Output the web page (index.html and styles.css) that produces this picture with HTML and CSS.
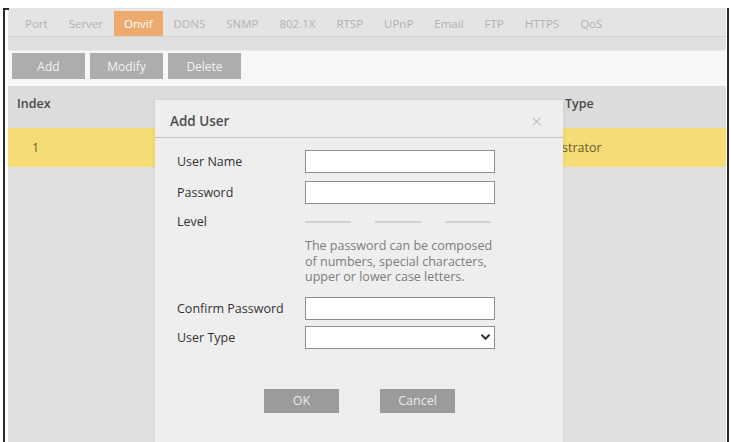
FILE: index.html
```html
<!DOCTYPE html>
<html lang="en">
<head>
    <meta charset="UTF-8">
    <meta name="viewport" content="width=device-width, initial-scale=1.0">
    <title>Network - Onvif</title>
    <link rel="stylesheet" href="styles.css">
</head>
<body>
<div class="frame">
    <span class="frame-tick"></span>

    <!-- network sub menu -->
    <div class="tabs">
        <span class="tab">Port</span>
        <span class="tab">Server</span>
        <span class="tab active">Onvif</span>
        <span class="tab">DDNS</span>
        <span class="tab">SNMP</span>
        <span class="tab">802.1X</span>
        <span class="tab">RTSP</span>
        <span class="tab">UPnP</span>
        <span class="tab">Email</span>
        <span class="tab">FTP</span>
        <span class="tab">HTTPS</span>
        <span class="tab">QoS</span>
    </div>
    <div class="tabs-line"></div>

    <div class="toolbar">
        <button class="btn">Add</button>
        <button class="btn">Modify</button>
        <button class="btn">Delete</button>
    </div>

    <div class="table">
        <div class="row head">
            <div class="cell cell-index">Index</div>
            <div class="cell cell-type">Type</div>
        </div>
        <div class="row selected">
            <div class="cell cell-index num">1</div>
            <div class="cell cell-type value">Administrator</div>
        </div>

        <!-- add user dialog -->
        <div class="dialog">
            <div class="dialog-head">
                <span class="dialog-title">Add User</span>
                <span class="dialog-close">&times;</span>
            </div>
            <div class="dialog-body">
                <div class="field">
                    <label class="field-label">User Name</label>
                    <input class="field-input" type="text">
                </div>
                <div class="field">
                    <label class="field-label">Password</label>
                    <input class="field-input" type="password">
                </div>
                <div class="field level">
                    <label class="field-label">Level</label>
                    <div class="level-bars">
                        <span></span><span></span><span></span>
                    </div>
                </div>
                <div class="hint">The password can be composed of numbers, special characters, upper or lower case letters.</div>
                <div class="field confirm">
                    <label class="field-label">Confirm Password</label>
                    <input class="field-input" type="password">
                </div>
                <div class="field">
                    <label class="field-label">User Type</label>
                    <div class="field-input select">
                        <svg width="11" height="8" viewBox="0 0 11 8"><path d="M1.5 1.8 L5.5 5.8 L9.5 1.8" fill="none" stroke="#333" stroke-width="2"/></svg>
                    </div>
                </div>
                <div class="dialog-buttons">
                    <button class="btn btn-dark">OK</button>
                    <button class="btn btn-dark">Cancel</button>
                </div>
            </div>
        </div>
    </div>
</div>
</body>
</html>
```

FILE: styles.css
```css
body {
  margin: 0;
  background: #fff;
  font-family: "Open Sans", "Noto Sans", sans-serif;
  color: #333;
}

.frame {
  position: relative;
  margin: 8px 2px 0 3px;
  height: 434px;
  border-left: 2px solid #2a2a2a;
  border-right: 2px solid #2a2a2a;
  padding: 0 1px 0 3px;
  display: flex;
  flex-direction: column;
}

.frame-tick {
  position: absolute;
  left: -2px;
  top: 0;
  width: 6px;
  height: 2px;
  background: #2a2a2a;
}

.tabs {
  height: 29px;
  background: #e4e4e4;
  display: flex;
  align-items: flex-end;
  padding-left: 7px;
  border-bottom: 1px solid #d2d2d2;
  box-sizing: border-box;
}

.tab {
  height: 25px;
  line-height: 25px;
  padding: 0 10px;
  margin-right: 1px;
  font-size: 11.5px;
  color: #b2b2b2;
}

.tab.active {
  background: #eeaa6c;
  color: #fff;
}

.tabs-line {
  height: 13px;
  background: #dfdfdf;
  border-bottom: 1px solid #ececec;
}

.toolbar {
  height: 35px;
  background: #f7f7f7;
  display: flex;
  align-items: flex-start;
  padding: 2px 0 0 4px;
  box-sizing: border-box;
  gap: 5px;
}

.btn {
  border: none;
  outline: none;
  cursor: pointer;
  width: 73px;
  height: 26px;
  padding: 0;
  font-family: inherit;
  font-size: 12px;
  color: #f2f2f2;
  background: #adadad;
}

.table {
  position: relative;
  flex: 1;
  background: #e0e0e0;
}

.row {
  position: relative;
}

.row.head {
  height: 42px;
  background: #dcdcdc;
}

.row.selected {
  height: 39px;
  background: #f5dc76;
}

.cell {
  position: absolute;
  top: 0;
  font-size: 12.5px;
  color: #555;
}

.head .cell {
  top: 9px;
  font-weight: 600;
  color: #4a4a4a;
}

.selected .cell {
  top: 11px;
  color: #6a5a2a;
}

.cell-index {
  left: 9px;
}

.num {
  left: 24px;
}

.cell-type {
  left: 557px;
}

.value {
  left: 513px;
}

.dialog {
  position: absolute;
  left: 147px;
  top: 14px;
  width: 408px;
  bottom: 0;
  background: #eeeeee;
  box-shadow: 0 0 4px rgba(0, 0, 0, .08);
}

.dialog-head {
  height: 38px;
  border-bottom: 1px solid #c4c4c4;
  display: flex;
  align-items: center;
  justify-content: space-between;
  padding: 4px 21px 0 15px;
  box-sizing: border-box;
}

.dialog-title {
  font-size: 13.5px;
  font-weight: 600;
  color: #4e4e4e;
}

.dialog-close {
  font-size: 19px;
  color: #b0b0b0;
  font-weight: 300;
}

.dialog-body {
  padding: 12px 0 0 22px;
}

.field {
  display: flex;
  align-items: center;
  margin-bottom: 8px;
}

.field-label {
  width: 128px;
  font-size: 12.5px;
  color: #333;
}

.field-input {
  width: 190px;
  height: 23px;
  box-sizing: border-box;
  border: 1px solid #8e8e8e;
  background: #fff;
  margin: 0;
}

.level {
  height: 18px;
}

.level-bars {
  display: flex;
  width: 186px;
  justify-content: space-between;
  padding-top: 2px;
}

.level-bars span {
  width: 46px;
  height: 2px;
  background: #cfcfcf;
}

.hint {
  margin: 6px 0 0 128px;
  width: 202px;
  font-size: 12.5px;
  line-height: 15.5px;
  color: #7d7d7d;
}

.confirm {
  margin-top: 12px;
  margin-bottom: 6px;
}

.select {
  display: flex;
  align-items: center;
  justify-content: flex-end;
  padding-right: 3px;
}

.dialog-buttons {
  display: flex;
  gap: 41px;
  margin: 40px 0 0 87px;
}

.btn-dark {
  width: 75px;
  height: 24px;
  background: #9b9b9b;
  font-size: 12.5px;
  color: #eaeaea;
}
```
